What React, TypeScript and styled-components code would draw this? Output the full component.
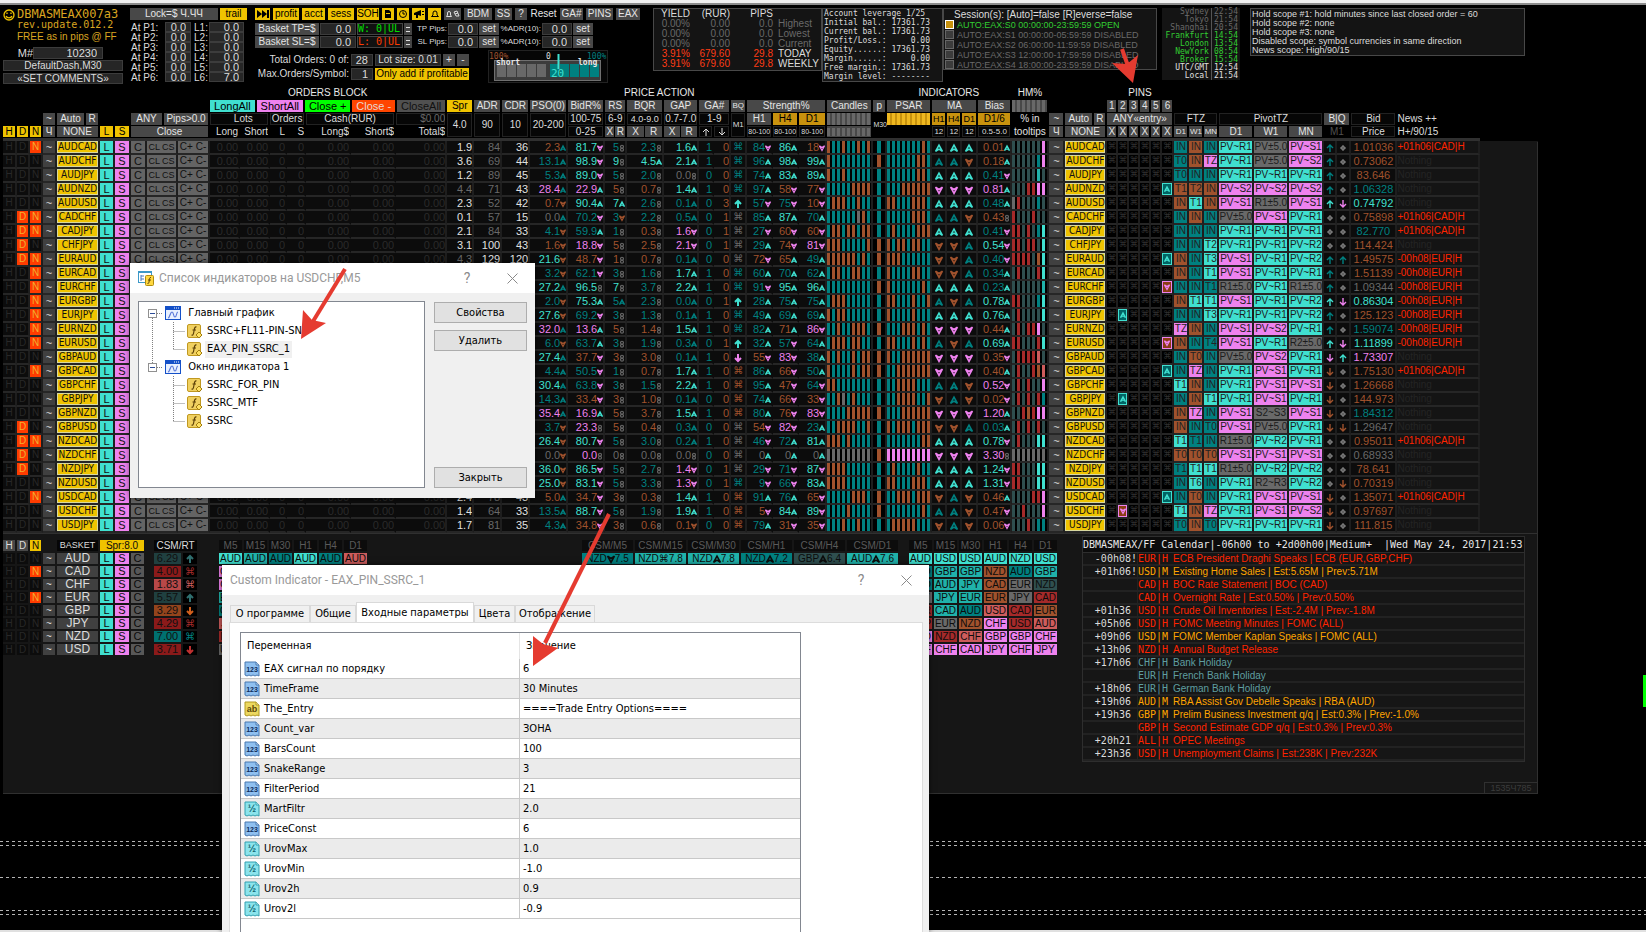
import React from "react";
import styled, { createGlobalStyle, css } from "styled-components";

const SANS = `"Liberation Sans", Arial, sans-serif`;
const MONO = `"DejaVu Sans Mono", monospace`;
const UI = `"DejaVu Sans Condensed", "DejaVu Sans", sans-serif`;
const TITLE = `Roboto, "Noto Sans", sans-serif`;

const C: Record<string, string> = {
  t: "#008080", T: "#40e0d0", s: "#a0522d", v: "#ee82ee", g: "#696969", w: "#e0e0e0",
  d: "#2f4f4f", L: "#20b2aa", r: "#a52a2a", c: "#cd5c5c", x: "#161616",
};

const Global = createGlobalStyle`
  html, body { margin: 0; height: 100%; background: #000; overflow: hidden; }
  #root { height: 100%; }
  button, input { font: inherit; margin: 0; padding: 0; border: 0; border-radius: 0; }
`;

const Page = styled.main`
  position: relative;
  min-width: 1560px;
  height: 100vh;
  overflow: hidden;
  display: flex;
  flex-direction: column;
  background: #000;
  color: #dcdcdc;
  font: 10px/12px ${SANS};
`;
const WindowEdge = styled.div`
  height: 3px;
  flex: none;
  background: #f0f0f0;
  border-bottom: 2px solid #8c8c8c;
`;

/* ---------- top control strip ---------- */
const TopBar = styled.header`
  display: flex;
  align-items: flex-start;
  height: 78px;
  flex: none;
  padding: 3px 0 0 3px;
  white-space: nowrap;
`;
const tone = {
  grey: css`background: #484848; color: #e4e4e4;`,
  dark: css`background: #262626; color: #dcdcdc; box-shadow: inset 0 0 0 1px #3c3c3c;`,
  gold: css`background: #efc300; color: #000;`,
  amber: css`background: #c8920e; color: #000;`,
  black: css`background: #000; color: #e4e4e4;`,
  box: css`background: #060606; color: #dcdcdc; box-shadow: inset 0 0 0 1px #222;`,
  cyan: css`background: #40e0d0; color: #000;`,
  pink: css`background: #ee82ee; color: #000;`,
  green: css`background: #00ff00; color: #000;`,
  red: css`background: #ff4500; color: #e8d8d0;`,
  mute: css`background: #505050; color: #111;`,
};
type Tone = keyof typeof tone;

const Btn = styled.button<{ $t?: Tone; $w?: number; $h?: number }>`
  ${(p) => tone[p.$t || "grey"]}
  display: flex;
  align-items: center;
  justify-content: center;
  flex: ${(p) => (p.$w ? "none" : "1 1 auto")};
  width: ${(p) => (p.$w ? p.$w + "px" : "auto")};
  height: ${(p) => p.$h || 12}px;
  overflow: hidden;
  white-space: nowrap;
`;
const Box = styled.input<{ $w: number; $h?: number }>`
  ${tone.dark}
  flex: none;
  width: ${(p) => p.$w}px;
  height: ${(p) => p.$h || 12}px;
  text-align: right;
  padding-right: 5px;
  box-sizing: border-box;
  font-size: 11px;
`;
const Brand = styled.section`
  width: 120px;
  margin-right: 7px;
  display: flex;
  flex-direction: column;
  font-size: 11px;
`;
const BrandHead = styled.div`
  display: flex;
  gap: 2px;
  color: #daa520;
  height: 39px;
  svg { margin-top: 1px; }
`;
const BrandName = styled.h1`
  margin: 0;
  font: 12px/12px ${MONO};
`;
const BrandRev = styled.div`
  font: 10px/9px ${MONO};
`;
const BrandNote = styled.div`
  font: 10px/15px ${SANS};
`;
const MagicRow = styled.label`
  display: flex;
  justify-content: flex-end;
  padding-right: 20px;
  height: 13px;
  input { padding-right: 6px; }
`;
const Stack = styled.div`
  display: flex;
  flex-direction: column;
  gap: 2px;
  font-size: 10px;
`;
const LockPanel = styled.section`
  width: 117px;
  margin-right: 8px;
`;
const Line = styled.div<{ $gap?: number; $mt?: number }>`
  display: flex;
  gap: ${(p) => p.$gap ?? 2}px;
  margin-top: ${(p) => p.$mt ?? 0}px;
  align-items: center;
`;
const Levels = styled.div`
  display: grid;
  grid-template-columns: 35px 26px 18px 35px;
  margin-top: 2px;
  font: 10px/10px ${SANS};
  label { padding: 1px 0 0 1px; height: 9px; }
  label:nth-of-type(even) { padding-left: 3px; }
`;
const Controls = styled.section`
  width: 388px;
  margin-right: 10px;
`;
const Mono = styled.div<{ $c: string; $w: number }>`
  width: ${(p) => p.$w}px;
  height: 12px;
  box-sizing: border-box;
  border: 1px solid #444;
  background: #111;
  color: ${(p) => p.$c};
  font: 10px/10px ${MONO};
  overflow: hidden;
  white-space: pre;
`;
const Spinner = styled.button`
  width: 8px;
  height: 12px;
  background: #444;
  color: #ddd;
  display: flex;
  align-items: center;
  justify-content: center;
`;
const FieldLabel = styled.label<{ $w: number; $f?: number }>`
  width: ${(p) => p.$w}px;
  flex: none;
  text-align: right;
  white-space: nowrap;
  font-size: ${(p) => p.$f || 10}px;
`;
const LowerControls = styled.div`
  display: flex;
  gap: 20px;
  margin-top: 2px;
`;
const OrderCol = styled.div`
  display: flex;
  flex-direction: column;
  gap: 2px;
  padding-top: 4px;
  width: 213px;
`;
const Gauge = styled.div`
  width: 118px;
  height: 31px;
  border: 1px solid #222;
  background: #060606;
  flex: none;
  svg { display: block; }
`;
const Panel = styled.section<{ $w: number; $h: number }>`
  box-sizing: border-box;
  width: ${(p) => p.$w}px;
  height: ${(p) => p.$h}px;
  flex: none;
  border: 1px solid #484848;
  background: #141414;
`;
const YieldTable = styled.table`
  border-collapse: collapse;
  table-layout: fixed;
  width: 166px;
  font: 10px/10px ${SANS};
  td, th { padding: 0; font-weight: normal; text-align: right; height: 10px; color: inherit; }
  td:last-child { text-align: left; padding-left: 5px; }
`;
const YRow = styled.tr<{ $c: string; $l?: string }>`
  color: ${(p) => p.$c};
  td:last-child { color: ${(p) => p.$l || p.$c}; }
`;
const Account = styled.pre`
  margin: 0;
  padding-left: 1px;
  font: 8px/9px ${MONO};
`;
const Sessions = styled.div`
  font: 9px/10px ${SANS};
  padding-top: 1px;
`;
const SessionTitle = styled.div`
  padding-left: 10px;
  font-size: 10px;
`;
const SessionLine = styled.label<{ $on?: boolean }>`
  display: flex;
  gap: 3px;
  color: ${(p) => (p.$on ? "#32cd32" : "#696969")};
  input {
    appearance: none;
    box-sizing: border-box;
    width: 9px;
    height: 9px;
    margin-left: 1px;
    background: ${(p) => (p.$on ? "#c8920e" : "#3c3c3c")};
    border: 1px solid ${(p) => (p.$on ? "#fff" : "#666")};
  }
`;
const Clocks = styled.table`
  border-collapse: collapse;
  background: #141414;
  width: 78px;
  margin: 0 10px 0 5px;
  font: 8px/8px ${MONO};
  td, th { padding: 0; height: 8px; font-weight: normal; text-align: right; }
  td { border-left: 1px solid #555; padding-right: 2px; }
  th { padding-right: 2px; }
`;
const ClockRow = styled.tr<{ $c: string }>`
  color: ${(p) => p.$c};
`;
const Scope = styled.div`
  font: 9px/9px ${SANS};
  padding: 1px;
`;

/* ---------- symbol grid ---------- */
const Frame = styled.section`
  margin: 0 108px 0 3px;
  flex: none;
  height: 708px;
  display: flex;
  flex-direction: column;
  background:
    linear-gradient(#303030, #303030) right bottom / 1px 652px no-repeat,
    linear-gradient(#303030, #303030) left bottom / 100% 1px no-repeat,
    linear-gradient(#000 0 55px, #161616 55px);
`;
const Grid = styled.table`
  table-layout: fixed;
  width: 1476px;
  flex: none;
  border-collapse: separate;
  border-spacing: 0;
  white-space: nowrap;
`;
const Th = styled.th<{ $t?: Tone; $h?: number; $a?: string; $f?: number; $c?: string; $spill?: boolean }>`
  ${(p) => p.$t && tone[p.$t]}
  box-sizing: border-box;
  height: ${(p) => p.$h || 13}px;
  padding: 0;
  overflow: ${(p) => (p.$spill ? "visible" : "hidden")};
  font-weight: normal;
  font-size: ${(p) => p.$f || 10}px;
  line-height: ${(p) => (p.$h === 12 ? 11 : 12)}px;
  text-align: ${(p) => p.$a || "center"};
  border-right: 2px solid #000;
  border-bottom: 1px solid #000;
  background-clip: padding-box;
  ${(p) => p.$c && `color: ${p.$c};`}
`;
const Divider = styled.td`
  height: 3px;
  padding: 0;
  background: #303030;
`;
const Title = styled(Th)`
  color: #e8e8e8;
  vertical-align: bottom;
`;
const Flex = styled.div<{ $gap?: number; $h?: number; $f?: number }>`
  display: flex;
  gap: ${(p) => p.$gap ?? 2}px;
  height: ${(p) => p.$h || 12}px;
  font-size: ${(p) => p.$f || 10}px;
  align-items: center;
`;
const Td = styled.td<{ $bg?: string; $c?: string; $a?: string; $f?: number; $join?: boolean }>`
  box-sizing: border-box;
  height: 14px;
  padding: 0;
  overflow: hidden;
  text-align: ${(p) => p.$a || "right"};
  color: ${(p) => p.$c || "#dcdcdc"};
  background: ${(p) => p.$bg || "#0c0c0c"};
  font: ${(p) => p.$f || 11}px/12px ${SANS};
  border-right: 2px solid ${(p) => (p.$join ? "#0c0c0c" : "#1e1e1e")};
  border-bottom: 2px solid #262626;
`;
const CellBtn = styled.button<{ $bg: string; $c?: string; $edge?: string; $f?: number }>`
  display: block;
  width: 100%;
  height: 12px;
  text-align: center;
  background: ${(p) => p.$bg};
  color: ${(p) => p.$c || "#111"};
  box-shadow: ${(p) => (p.$edge ? `inset 0 0 0 1px ${p.$edge}` : "none")};
  font: ${(p) => p.$f || 11}px/12px ${(p) => (p.$edge ? UI : SANS)};
  overflow: hidden;
  white-space: pre;
`;
const Bars = styled.div<{ $h?: number; $center?: boolean }>`
  display: flex;
  gap: 2px;
  height: ${(p) => p.$h || 12}px;
  justify-content: ${(p) => (p.$center ? "center" : "flex-start")};
`;
const Bar = styled.i<{ $c: string; $w?: number }>`
  width: ${(p) => p.$w || 3}px;
  background: ${(p) => p.$c};
`;
const PinBox = styled.span<{ $bg: string; $e: string }>`
  display: flex;
  align-items: center;
  justify-content: center;
  box-sizing: border-box;
  height: 12px;
  border: 1px solid ${(p) => p.$e};
  background: ${(p) => p.$bg};
`;

/* ---------- small glyphs ---------- */
const Glyph = styled.svg`
  vertical-align: middle;
  overflow: visible;
`;
const Mark = ({ k, c, s = 6 }: { k: string; c: string; s?: number }) => (
  <Glyph width={s} height={s} viewBox="0.500 0.500 7 7" fill="none" stroke={c} strokeWidth={1.4} aria-hidden>
    {k === "u" && <path d="M4 1.500L1 7L4 5L7 7Z" />}
    {k === "d" && <path d="M4 7L1 1.500L4 3.500L7 1.500Z" />}
    {k === "n" && (
      <>
        <circle cx="4" cy="2.500" r="1.700" />
        <circle cx="4" cy="6" r="1.700" />
      </>
    )}
  </Glyph>
);
const CmdGlyph = styled.span<{ $c: string; $s: number }>`
  display: inline-block;
  height: 11px;
  vertical-align: top;
  color: ${(p) => p.$c};
  font: ${(p) => p.$s}px/11px "DejaVu Sans", sans-serif;
`;
const Cmd = ({ c, s = 10 }: { c: string; s?: number }) => <CmdGlyph $c={c} $s={s}>⌘</CmdGlyph>;
const Arrow = ({ dir, c, w = 1.4 }: { dir: string; c: string; w?: number }) => (
  <Glyph width={8} height={8} viewBox="0 0 8 8" fill="none" stroke={c} strokeWidth={w} aria-hidden>
    {dir === "u" ? <path d="M4 8V1M1 4L4 1L7 4" /> : <path d="M4 0V7M1 4L4 7L7 4" />}
  </Glyph>
);
const Flake = ({ c }: { c: string }) => (
  <Glyph width={6} height={6} viewBox="0 0 6 6" fill="none" stroke={c} aria-hidden>
    <circle cx="3" cy="3" r="1.800" />
    <path d="M3 0V6M0 3H6" />
  </Glyph>
);

/* ---------- data ---------- */
type Row = {
  s: string; f: string; a: string; p: string; q: string; k: string; m: string;
  psar: string; h: string; ma: string; b: string; pin?: string; z: string; v: string; o: string; bid: string; n?: string;
};
const N1 = "+01h06|CAD|H";
const N2 = "-00h08|EUR|H";
const ROWS: Row[] = [
  { s: "AUDCAD", f: "N", a: "w1.9 g84 w36", p: "s2.3u T81.7d t5n t2.3n T1.6u 1 0 t", q: "t84d T86u s18d", k: "sttsttsts", m: "t", psar: "tttttttst", h: "ddddddv", ma: "UUU", b: "s0.01u", z: "tIN sIN tIN", v: "TPV~R1 gPV±5.0 vPV~S1", o: "un", bid: "s1.01036", n: N1 },
  { s: "AUDCHF", f: "", a: "w3.6 g69 w44", p: "t13.1u T98.9d T9n T4.5u T2.1u 1 0 t", q: "t96u T98u T99u", k: "stttttttt", m: "s", psar: "ttttttsst", h: "dddddtv", ma: "uud", b: "s0.18u", z: "tT0 sIN vTZ", v: "TPV~R1 gPV±5.0 vPV~S2", o: "un", bid: "s0.73062" },
  { s: "AUDJPY", f: "", a: "w1.2 g89 w45", p: "t5.3u T89.0d t5n t2.0n g0.0n 0 0 t", q: "t74u T83u T89u", k: "sttsttttt", m: "t", psar: "ttttttsst", h: "dddddLd", ma: "UUU", b: "t0.41d", z: "tT0 tIN tIN", v: "TPV~R1 TPV~R1 TPV~R1", o: "un", bid: "s83.646" },
  { s: "AUDNZD", f: "", a: "g4.4 g71 w43", p: "v28.4u v22.9u s5n s0.7n T1.4u 1 0 t", q: "t97u s58d s77d", k: "tttttssss", m: "t", psar: "tttssssss", h: "dddrrvv", ma: "DDD", b: "v0.81u", pin: "6u", z: "sT1 sT2 sIN", v: "vPV~S2 vPV~S2 vPV~S2", o: "un", bid: "t1.06328" },
  { s: "AUDUSD", f: "", a: "w2.3 g52 w42", p: "s0.7d T90.4u T7u t2.6n t0.1u 0 3 U", q: "t57d t75d s10d", k: "tsssttstt", m: "t", psar: "sstttssst", h: "grdddtd", ma: "UUU", b: "t0.48u", z: "sIN TT1 sIN", v: "vPV~S1 gR1±5.0 vPV~S1", o: "UD", bid: "T0.74792" },
  { s: "CADCHF", f: "DN", a: "w0.1 g57 w15", p: "g0.0u t70.2d t3d t2.2n t0.5u 0 1 g", q: "t85u T87u t70u", k: "ttttttgst", m: "t", psar: "tttttssst", h: "rdddrdd", ma: "uud", b: "s0.43n", z: "tIN sIN tIN", v: "gPV±5.0 vPV~S1 TPV~R1", o: "nn", bid: "s0.75898", n: N1 },
  { s: "CADJPY", f: "DN", a: "w2.1 g84 w33", p: "t4.1d t59.9u t1n s0.3n v1.6d 0 1 g", q: "t27d s60d s60d", k: "tsstsstss", m: "t", psar: "tsttttsss", h: "rrdrdtT", ma: "UUU", b: "t0.41d", z: "tIN tIN tIN", v: "TPV~R1 TPV~R1 TPV~R1", o: "nn", bid: "t82.770", n: N1 },
  { s: "CHFJPY", f: "D", a: "w3.1 w100 w43", p: "s1.6d v18.8d s5n s2.5n v2.1d 0 1 g", q: "t29u s74d v81d", k: "sssttttts", m: "s", psar: "stsstsstt", h: "rrdrrdT", ma: "ddu", b: "T0.54d", z: "tIN tIN TT2", v: "TPV~R1 TPV~R1 TPV~R2", o: "nn", bid: "s114.424" },
  { s: "EURAUD", f: "DN", a: "g4.3 w129 w120", p: "T21.6d s48.7d s1n s0.7n t0.1u 0 0 g", q: "s72d s65u t49u", k: "sssssstst", m: "s", psar: "ssstttttt", h: "rrrrdsT", ma: "ddu", b: "t0.40d", pin: "6u", z: "sIN tIN TT3", v: "vPV~S1 TPV~R1 TPV~R2", o: "uu", bid: "s1.49575", n: N2 },
  { s: "EURCAD", f: "N", a: "", p: "t3.2d t62.1d t3n t1.6n T1.7u 1 0 t", q: "t60u t70u t62u", k: "tssttsstt", m: "t", psar: "sttttsstt", h: "drdddrT", ma: "ddu", b: "t0.34u", z: "sIN tIN TT1", v: "vPV~S1 TPV~R1 TPV~R1", o: "un", bid: "s1.51139", n: N2 },
  { s: "EURCHF", f: "N", a: "", p: "T27.2u T96.5n T7n t3.7n T2.2u 1 0 t", q: "t91d T95u T96u", k: "ttttttttt", m: "s", psar: "sttttttst", h: "ddddddL", ma: "UUU", b: "t0.23u", pin: "6d", z: "tIN tIN tT1", v: "gR1±5.0 TPV~R1 gR1±5.0", o: "un", bid: "g1.09344", n: N2 },
  { s: "EURGBP", f: "N", a: "", p: "t2.0d T75.3u t5u t2.3n t0.0u 0 1 U", q: "t28u t75u t75u", k: "tsssttttt", m: "t", psar: "sstttstts", h: "rrdddtT", ma: "udu", b: "T0.78u", z: "sIN TT1 TT1", v: "vPV~S1 TPV~R1 TPV~R2", o: "UD", bid: "T0.86304", n: N2 },
  { s: "EURJPY", f: "N", a: "", p: "T27.6d t69.2d t3n t1.3n t0.1u 1 0 t", q: "t49u t69u t69u", k: "stssttttt", m: "t", psar: "sttttsttt", h: "drddddT", ma: "UUU", b: "T0.76u", pin: "2u", z: "tIN tIN TT3", v: "TPV~R1 TPV~R1 TPV~R2", o: "un", bid: "s125.123", n: N2 },
  { s: "EURNZD", f: "N", a: "", p: "v32.0u v13.6u s5n s1.4n T1.5u 1 0 t", q: "t82u s71u v86d", k: "ttsttssst", m: "s", psar: "tttssstst", h: "drdrrvd", ma: "DDD", b: "s0.44u", z: "vTZ sIN tIN", v: "vPV~S1 vPV~S2 TPV~R1", o: "un", bid: "t1.59074", n: N2 },
  { s: "EURUSD", f: "N", a: "", p: "t6.0d t63.7u t3n t1.9n t0.3u 0 1 U", q: "t32u t57d t64u", k: "tssstsstt", m: "t", psar: "sstttstst", h: "rrdddrT", ma: "udu", b: "T0.69u", pin: "6d", z: "sIN tIN tT4", v: "vPV~S1 TPV~R1 gR2±5.0", o: "UD", bid: "T1.11899", n: N2 },
  { s: "GBPAUD", f: "", a: "", p: "T27.4u s37.7d s3n s3.0n t0.1u 1 0 D", q: "s55d v83d t38u", k: "ststtstss", m: "s", psar: "sttssssss", h: "drrrrcd", ma: "DDD", b: "s0.35d", z: "tIN sT0 tIN", v: "gPV±5.0 vPV~S2 TPV~R1", o: "DU", bid: "v1.73307" },
  { s: "GBPCAD", f: "N", a: "", p: "t4.4u t50.5d t1n s0.7n T1.7u 1 0 s", q: "t86u s66d t50u", k: "sttttstss", m: "s", psar: "ttsssssss", h: "drddrsc", ma: "DDD", b: "s0.40u", pin: "6u", z: "tIN vTZ tIN", v: "TPV~R1 vPV~S1 TPV~R1", o: "dn", bid: "s1.75130", n: N1 },
  { s: "GBPCHF", f: "", a: "", p: "T30.4u t63.8d t3n t1.5n T2.2u 1 0 s", q: "t95u s47d t64d", k: "ssttttttt", m: "t", psar: "ttssssttt", h: "drdrddv", ma: "uud", b: "v0.52d", z: "TT1 sIN tIN", v: "TPV~R1 vPV~S1 vPV~S1", o: "dn", bid: "s1.26668" },
  { s: "GBPJPY", f: "", a: "", p: "t14.3u s33.4d s3n s1.0n t0.1u 0 0 s", q: "t74u s66d s33d", k: "ttsgtsttt", m: "t", psar: "ttsssstts", h: "drdrdrt", ma: "dud", b: "s0.02d", pin: "2u", z: "tIN sIN TT1", v: "TPV~R1 vPV~S1 TPV~R1", o: "dn", bid: "s144.973" },
  { s: "GBPNZD", f: "", a: "", p: "v35.4u v16.9u s5n s3.7n T1.5u 1 0 s", q: "t80u s76d v83d", k: "ttttsssss", m: "s", psar: "tttssssss", h: "ddrsrvv", ma: "DDD", b: "v1.20u", z: "sIN vTZ tIN", v: "vPV~S1 gS2~S3 vPV~S1", o: "dn", bid: "t1.84312" },
  { s: "GBPUSD", f: "D", a: "", p: "t3.7d v23.3n s5n s0.4n t0.3u 0 0 g", q: "s54d v82d t23u", k: "ttsssstts", m: "t", psar: "stssstsss", h: "drdrdrd", ma: "ddu", b: "t0.03u", z: "sIN tIN tT0", v: "vPV~S1 gPV±5.0 TPV~R1", o: "dd", bid: "g1.29647" },
  { s: "NZDCAD", f: "DN", a: "", p: "T26.4d T80.7d t5n t3.0n t0.2u 1 0 g", q: "t46d t72u T81u", k: "ssststttt", m: "t", psar: "tttttttss", h: "drdddTT", ma: "UUU", b: "T0.78d", z: "TT1 tT1 tIN", v: "gR1±5.0 TPV~R2 TPV~R1", o: "nn", bid: "s0.95011", n: N1 },
  { s: "NZDCHF", f: "D", a: "", p: "g0.0d v0.0n g0n g0.0n g0.0n 0 0 g", q: "g0u g0u g0u", k: "ggggggggg", m: "s", psar: "vvvvvvvvv", h: "ggggggg", ma: "DDD", b: "v3.30n", z: "sT0 sT0 sT0", v: "vPV~S1 vPV~S1 vPV~S1", o: "nn", bid: "g0.68933" },
  { s: "NZDJPY", f: "D", a: "", p: "T36.0d T86.5d t5n t2.7n v1.4d 0 1 g", q: "t29d t71d T87d", k: "ssssttttt", m: "t", psar: "tsttttstt", h: "rrdddTT", ma: "UUU", b: "T1.24d", z: "tT1 TT1 TT1", v: "gR1±5.0 TPV~R2 TPV~R2", o: "nn", bid: "s78.641" },
  { s: "NZDUSD", f: "", a: "", p: "T25.0d T83.1d t5n t3.3n v1.3d 0 1 t", q: "t9d t66d T83u", k: "ssssttttt", m: "t", psar: "sstttssst", h: "rrdddTT", ma: "UUU", b: "T1.31d", z: "tIN TT6 tIN", v: "TPV~R1 gR2~R3 TPV~R2", o: "nd", bid: "s0.70319" },
  { s: "USDCAD", f: "N", a: "w2.4 g78 w43", p: "s5.0u s34.7d s3n s0.3n T1.4u 1 0 s", q: "t91u t76u s65d", k: "tttttssst", m: "s", psar: "ttssstsss", h: "ddddrrv", ma: "dud", b: "s0.46u", pin: "6u", z: "tIN sT0 tIN", v: "TPV~R1 vPV~S1 vPV~S1", o: "dn", bid: "s1.35071", n: N1 },
  { s: "USDCHF", f: "", a: "w1.4 g64 w33", p: "t13.5u T88.7d t5n t1.9n T1.9u 1 0 s", q: "s5d T84u T89d", k: "ttttstttt", m: "s", psar: "tttttttst", h: "ddrdddv", ma: "uud", b: "s0.47d", pin: "2d", z: "TT1 sIN vTZ", v: "TPV~R1 vPV~S1 vPV~S2", o: "dn", bid: "s0.97697" },
  { s: "USDJPY", f: "", a: "w1.7 g81 w35", p: "t4.3u s34.8d s3n s0.6n s0.1d 0 0 s", q: "t79u s31d s35d", k: "tttsttstt", m: "t", psar: "tsssssttt", h: "dddrdtt", ma: "dud", b: "s0.06d", z: "tT0 sIN tT0", v: "TPV~R1 TPV~R1 TPV~R1", o: "dn", bid: "s111.815" },
];

const WIDTHS = [
  14, 13, 13, 14, 43, 15, 16, 16, 31, 32,
  30, 30, 17, 19, 45, 45, 51,
  27, 28, 28, 38, 37, 22, 37, 35, 15, 17, 16, 26, 26, 28, 46, 14, 45, 15, 15, 16, 34, 37,
  16, 42, 11, 11, 11, 11, 11, 12, 15, 15, 15, 35, 35, 35, 13, 14, 46, 82,
];

const split = (v: string) => {
  const m = v.match(/^(.)([\d.]+)([udn]?)$/)!;
  return { c: C[m[1]], bright: "TvU".includes(m[1]), val: m[2], k: m[3] };
};
const ValueCell = ({ v, mode, join }: { v: string; mode: "dim" | "bright" | "auto"; join?: boolean }) => {
  const { c, bright, val, k } = split(v);
  const hot = mode === "bright" || (mode === "auto" && bright);
  const mc = k === "n" ? C.g : k === "u" ? (hot ? C.T : C.t) : hot ? C.v : C.s;
  return (
    <Td $c={c} $join={join}>
      {val}
      {k && <Mark k={k} c={mc} />}
    </Td>
  );
};
const BarSet = ({ v }: { v: string }) => (
  <Bars>{v.split("").map((x, i) => <Bar key={i} $c={C[x]} />)}</Bars>
);
const GreyBars = ({ n, c = "#686868", h }: { n: number; c?: string; h?: number }) => (
  <Bars $h={h}>{Array.from({ length: n }, (_, i) => <Bar key={i} $c={c} />)}</Bars>
);

const SymbolRow = ({ r }: { r: Row }) => {
  const p = r.p.split(" ");
  const a = r.a ? r.a.split(" ") : ["", "", ""];
  const modes = ["dim", "bright", "auto", "auto", "auto"] as const;
  const bq = p[7];
  return (
    <tr>
      {["H", "D", "N"].map((x) => (
        <Td key={x}>
          <CellBtn $f={10} $bg={r.f.includes(x) ? "#ff3c00" : "#0c0c0c"} $c={r.f.includes(x) ? "#efb030" : "#282828"}>{x}</CellBtn>
        </Td>
      ))}
      <Td><CellBtn $bg="#404040" $c="#ddd">~</CellBtn></Td>
      <Td><CellBtn $bg="#efc300" $edge="#d8d8a0" $f={10}>{r.s}</CellBtn></Td>
      <Td><CellBtn $bg="#40e0d0">L</CellBtn></Td>
      <Td><CellBtn $bg="#ee82ee">S</CellBtn></Td>
      <Td><CellBtn $bg="#646464">C</CellBtn></Td>
      <Td><CellBtn $bg="#646464" $f={9}>CL CS</CellBtn></Td>
      <Td><CellBtn $bg="#646464" $f={10}>C+ C-</CellBtn></Td>
      {["0.00", "0.00", "0", "0", "0.00", "0.00", "0.00"].map((x, i) => (
        <Td key={i} $c="#2a2a2a" $join={i < 6}>{x}</Td>
      ))}
      {a.map((x, i) => (
        <Td key={i} $c={C[x[0]]}>{x.slice(1)}</Td>
      ))}
      {modes.map((m, i) => <ValueCell key={i} v={p[i]} mode={m} />)}
      <Td $c={C.t} $join>{p[5]}</Td>
      <Td $c={C.s}>{p[6]}</Td>
      <Td $a="center">
        {bq === "U" ? <Arrow dir="u" c={C.T} w={2} /> : bq === "D" ? <Arrow dir="d" c={C.v} w={2} /> : <Cmd c={C[bq]} />}
      </Td>
      {r.q.split(" ").map((x, i) => <ValueCell key={i} v={x} mode="bright" join={i < 2} />)}
      <Td $bg="#000"><BarSet v={r.k} /></Td>
      <Td $bg="#000"><Bars $center><Bar $c={C[r.m]} $w={4} /></Bars></Td>
      <Td $bg="#000"><BarSet v={r.psar} /></Td>
      {r.ma.split("").map((x, i) => (
        <Td key={i} $a="center">
          <Mark s={8} k={x.toLowerCase()} c={x === "U" ? C.T : x === "u" ? C.t : x === "D" ? C.v : C.s} />
        </Td>
      ))}
      <ValueCell v={r.b} mode="bright" />
      <Td $bg="#000"><BarSet v={r.h} /></Td>
      <Td><CellBtn $bg="#404040" $c="#ddd">~</CellBtn></Td>
      <Td><CellBtn $bg="#efc300" $edge="#d8d8a0" $f={10}>{r.s}</CellBtn></Td>
      {[1, 2, 3, 4, 5, 6].map((i) => {
        const hit = r.pin && r.pin[0] === String(i) ? r.pin[1] : "";
        return (
          <Td key={i} $a="center" $bg="#000">
            {hit ? (
              <PinBox $bg={hit === "u" ? "#006464" : "#8b3c14"} $e={hit === "u" ? C.T : C.v}>
                <Mark k={hit} c={hit === "u" ? C.T : C.v} />
              </PinBox>
            ) : (
              <Cmd c="#303030" s={9} />
            )}
          </Td>
        );
      })}
      {r.z.split(" ").map((x, i) => (
        <Td key={i} $a="center" $bg={C[x[0]]} $c="#222" $f={10}>{x.slice(1)}</Td>
      ))}
      {r.v.split(" ").map((x, i) => (
        <Td key={i} $a="center" $bg={C[x[0]]} $c="#1c1c1c" $f={10}>{x.slice(1)}</Td>
      ))}
      {r.o.split("").map((x, i) => (
        <Td key={i} $a="center">
          {x === "n" ? <Flake c="#808080" /> : <Arrow dir={x.toLowerCase()} c={{ u: C.t, U: C.T, d: C.s, D: C.v }[x]!} />}
        </Td>
      ))}
      <Td $a="center" $c={C[r.bid[0]]}>{r.bid.slice(1)}</Td>
      <Td $a="left" $bg="#141414" $c={r.n ? "#ff2400" : "#242424"} $f={10}>{r.n || "Nothing"}</Td>
    </tr>
  );
};

const GridHead = () => (
  <thead>
    <tr>
      <Title $h={14} colSpan={10} />
      <Title $h={14} colSpan={7}>ORDERS BLOCK</Title>
      <Title $h={14} colSpan={15}>PRICE ACTION</Title>
      <Title $h={14} />
      <Title $h={14} colSpan={5}>INDICATORS</Title>
      <Title $h={14}>HM%</Title>
      <Title $h={14} colSpan={2} />
      <Title $h={14} colSpan={6}>PINS</Title>
      <Title $h={14} colSpan={10} />
    </tr>
    <tr>
      <Th colSpan={10} />
      <Th colSpan={7}>
        <Flex $f={11}>
          <Btn $t="cyan">LongAll</Btn>
          <Btn $t="pink">ShortAll</Btn>
          <Btn $t="green">Close +</Btn>
          <Btn $t="red">Close -</Btn>
          <Btn $t="mute">CloseAll</Btn>
        </Flex>
      </Th>
      <Th $t="gold">Spr</Th>
      {["ADR", "CDR", "PSO(0)", "BidR%", "RS", "BQR", "GAP"].map((x) => <Th key={x} $t="grey">{x}</Th>)}
      <Th $t="grey" colSpan={2}>GA#</Th>
      <Th $t="grey" $f={8}>BQ</Th>
      <Th $t="grey" colSpan={3}>Strength%</Th>
      <Th $t="grey">Candles</Th>
      <Th $t="grey">p</Th>
      <Th $t="grey">PSAR</Th>
      <Th $t="grey" colSpan={3}>MA</Th>
      <Th $t="grey">Bias</Th>
      <Th $t="grey"><GreyBars n={7} /></Th>
      <Th colSpan={2} />
      {[1, 2, 3, 4, 5, 6].map((x) => <Th key={x} $t="grey">{x}</Th>)}
      <Th colSpan={10} />
    </tr>
    <tr>
      <Th colSpan={3} />
      <Th $t="grey">~</Th>
      <Th><Flex><Btn $w={27}>Auto</Btn><Btn>R</Btn></Flex></Th>
      <Th colSpan={2} />
      <Th colSpan={3}><Flex><Btn $w={31}>ANY</Btn><Btn>Pips&gt;0.0</Btn></Flex></Th>
      <Th $t="box" colSpan={2}>&nbsp;&nbsp;&nbsp;Lots</Th>
      <Th $t="box" colSpan={2}>Orders</Th>
      <Th $t="box" colSpan={2}>Cash(RUR)</Th>
      <Th $t="box" $a="right" $c="#696969">$0.00</Th>
      {["4.0", "90", "10", "20-200"].map((x) => <Th key={x} rowSpan={2} $t="box">{x}</Th>)}
      <Th $t="box">100-75</Th>
      <Th $t="box">6-9</Th>
      <Th $t="box" $f={9}>4.0-9.0</Th>
      <Th $t="box">0.7-7.0</Th>
      <Th $t="box" colSpan={2}>1-9</Th>
      <Th $t="box" rowSpan={2} $f={8}>M1</Th>
      <Th $t="grey">H1</Th>
      <Th $t="amber">H4</Th>
      <Th $t="amber">D1</Th>
      <Th $t="grey"><GreyBars n={9} /></Th>
      <Th rowSpan={2} $f={7} $spill>M30</Th>
      <Th $t="amber"><GreyBars n={9} c="#efb820" /></Th>
      {["H1", "H4", "D1"].map((x) => <Th key={x} $t="amber" $f={9}>{x}</Th>)}
      <Th $t="amber">D1/6</Th>
      <Th $t="black">% in</Th>
      <Th $t="grey">~</Th>
      <Th><Flex><Btn $w={27}>Auto</Btn><Btn>R</Btn></Flex></Th>
      <Th $t="grey" colSpan={6}>ANY«entry»</Th>
      <Th $t="box" colSpan={3}>FTZ</Th>
      <Th $t="box" colSpan={3}>PivotTZ</Th>
      <Th $t="grey" colSpan={2}>B|Q</Th>
      <Th $t="box">Bid</Th>
      <Th $a="left">News ++</Th>
    </tr>
    <tr>
      {["H", "D", "N"].map((x) => <Th key={x} $t="gold" $h={12}>{x}</Th>)}
      <Th $t="grey" $h={12}>Ч</Th>
      <Th $t="grey" $h={12}>NONE</Th>
      <Th $t="gold" $h={12}>L</Th>
      <Th $t="gold" $h={12}>S</Th>
      <Th $t="grey" $h={12} colSpan={3}>Close</Th>
      {["Long", "Short", "L", "S", "Long$", "Short$", "Total$"].map((x, i) => <Th key={i} $a="right" $h={12}>{x}</Th>)}
      <Th $t="box" $h={12}>0-25</Th>
      {[0, 1, 2].map((i) => (
        <Th key={i} $h={12}><Flex $gap={1} $h={11}><Btn $h={11}>X</Btn><Btn $h={11}>R</Btn></Flex></Th>
      ))}
      <Th $t="box" $h={12}><Arrow dir="u" c="#ddd" w={1} /></Th>
      <Th $t="box" $h={12}><Arrow dir="d" c="#ddd" w={1} /></Th>
      {[0, 1, 2].map((i) => <Th key={i} $t="box" $h={12} $f={7}>80-100</Th>)}
      <Th $t="grey" $h={12}><GreyBars n={9} h={8} /></Th>
      <Th $h={12} />
      {[0, 1, 2].map((i) => <Th key={i} $t="box" $h={12} $f={8}>12</Th>)}
      <Th $t="box" $h={12} $f={8}>0.5-5.0</Th>
      <Th $t="black" $h={12}>tooltips</Th>
      <Th $t="grey" $h={12}>Ч</Th>
      <Th $t="grey" $h={12}>NONE</Th>
      {[0, 1, 2, 3, 4, 5].map((i) => <Th key={i} $t="grey" $h={12}>X</Th>)}
      {["D1", "W1", "MN"].map((x) => <Th key={x} $t="grey" $h={12} $f={8}>{x}</Th>)}
      {["D1", "W1", "MN"].map((x) => <Th key={x} $t="grey" $h={12}>{x}</Th>)}
      <Th $h={12} colSpan={2} $c="#505050">M1</Th>
      <Th $t="box" $h={12}>Price</Th>
      <Th $a="left" $h={12}>H+/90/15</Th>
    </tr>
    <tr><Divider colSpan={57} /></tr>
  </thead>
);

/* ---------- bottom panel ---------- */
const Bottom = styled.div`
  flex: 1;
  display: flex;
  justify-content: space-between;
  padding: 2px 13px 0 0;
  border-top: 1px solid #303030;
  white-space: nowrap;
`;
const Group = styled.div<{ $gap: number }>`
  display: flex;
  align-items: flex-start;
  gap: ${(p) => p.$gap}px;
`;
const Small = styled.table<{ $w: number }>`
  table-layout: fixed;
  width: ${(p) => p.$w}px;
  margin-top: 4px;
  border-collapse: separate;
  border-spacing: 0;
  font: 10px/11px ${SANS};
`;
const Cell = styled.td<{ $bg?: string; $c?: string; $f?: number }>`
  box-sizing: border-box;
  height: 13px;
  padding: 0;
  overflow: hidden;
  text-align: center;
  background: ${(p) => p.$bg || "transparent"};
  color: ${(p) => p.$c || "#0c0c0c"};
  font-size: ${(p) => p.$f || 10}px;
  font-weight: normal;
  border-right: 2px solid #161616;
  border-bottom: 2px solid #161616;
  background-clip: padding-box;
  button { display: block; width: 100%; height: 11px; background: none; color: inherit; line-height: 11px; }
`;
const BASKETS: [string, string, string, string, string][] = [
  ["AUD", "", "6.29", "#204040", "a#2f6f6f"],
  ["CAD", "N", "4.00", "#8b1a1a", "c#a52a2a"],
  ["CHF", "", "1.83", "#b84848", "c#cd5c5c"],
  ["EUR", "N", "5.57", "#204040", "a#2f6f6f"],
  ["GBP", "", "3.29", "#94441c", "b#d2601d"],
  ["JPY", "", "4.29", "#8b1a1a", "c#a52a2a"],
  ["NZD", "", "7.00", "#007070", "c#008080"],
  ["USD", "", "3.71", "#8b1a1a", "b#c03030"],
];
const PERIODS = ["M5", "M15", "M30", "H1", "H4", "D1"];
const HeadCell = ({ children }: { children: React.ReactNode }) => (
  <Cell as="th" $bg="#0c0c0c" $c="#5a5a5a">{children}</Cell>
);
const Ranks = ({ rows }: { rows: string[] }) => (
  <Small $w={150}>
    <thead><tr>{PERIODS.map((x) => <HeadCell key={x}>{x}</HeadCell>)}</tr></thead>
    <tbody>
      {rows.map((r, i) => (
        <tr key={i}>
          {r.split(" ").map((x, j) => <Cell key={j} $bg={C[x[0]]}>{x.slice(1)}</Cell>)}
        </tr>
      ))}
    </tbody>
  </Small>
);
const Calendar = styled.table`
  table-layout: fixed;
  width: 443px;
  margin-left: 14px;
  border: 1px solid #2e2e2e;
  border-collapse: separate;
  border-spacing: 0;
  font: 10px/11px ${MONO};
  th { height: 15px; padding: 0; text-align: left; font-weight: normal; white-space: pre; background: #0c0c0c; border-bottom: 1px solid #2e2e2e; color: #e8e8e8; }
  td { box-sizing: border-box; height: 13px; padding: 0; border-bottom: 2px solid #222; white-space: pre; }
  td:first-child { text-align: right; color: #dcdcdc; border-right: 1px solid #222; }
`;
const CalRow = styled.tr<{ $c: string }>`
  color: ${(p) => p.$c};
  td:last-child { font: 10px/11px ${SANS}; }
`;
const EVENTS = [
  ["-00h08!", "EUR|H", "ECB President Draghi Speaks | ECB (EUR,GBP,CHF)"],
  ["+01h06!", "USD|M", "Existing Home Sales | Est:5.65M | Prev:5.71M"],
  ["", "CAD|H", "BOC Rate Statement | BOC (CAD)"],
  ["", "CAD|H", "Overnight Rate | Est:0.50% | Prev:0.50%"],
  ["+01h36 ", "USD|H", "Crude Oil Inventories | Est:-2.4M | Prev:-1.8M"],
  ["+05h06 ", "USD|H", "FOMC Meeting Minutes | FOMC (ALL)"],
  ["+09h06 ", "USD|M", "FOMC Member Kaplan Speaks | FOMC (ALL)"],
  ["+13h06 ", "NZD|H", "Annual Budget Release"],
  ["+17h06 ", "CHF|H", "Bank Holiday"],
  ["", "EUR|H", "French Bank Holiday"],
  ["+18h06 ", "EUR|H", "German Bank Holiday"],
  ["+19h06 ", "AUD|M", "RBA Assist Gov Debelle Speaks | RBA (AUD)"],
  ["+19h36 ", "GBP|M", "Prelim Business Investment q/q | Est:0.3% | Prev:-1.0%"],
  ["", "GBP|H", "Second Estimate GDP q/q | Est:0.3% | Prev:0.3%"],
  ["+20h21 ", "ALL|H", "OPEC Meetings"],
  ["+23h36 ", "USD|H", "Unemployment Claims | Est:238K | Prev:232K"],
];
const Badge = styled.div`
  align-self: flex-end;
  box-sizing: border-box;
  width: 54px;
  height: 12px;
  border: 1px solid #303030;
  color: #3c3c3c;
  text-align: center;
  font: 9px/10px ${SANS};
`;
const LevelArea = styled.div`
  flex: 1;
  padding-top: 47px;
  border-bottom: 2px solid #e0e0e0;
`;
const LevelLine = styled.div<{ $mb: number }>`
  height: 1px;
  margin-bottom: ${(p) => p.$mb}px;
  background: repeating-linear-gradient(90deg, #b4b4b4 0 3px, transparent 3px 6px);
`;
const ScrollFlag = styled.div`
  position: absolute;
  right: 0;
  top: 675px;
  width: 3px;
  height: 32px;
  background: #00ff00;
`;

/* ---------- floating windows ---------- */
const Win = styled.section<{ $x: number; $y: number; $w: number; $h?: number }>`
  position: absolute;
  left: ${(p) => p.$x}px;
  top: ${(p) => p.$y}px;
  width: ${(p) => p.$w}px;
  ${(p) => (p.$h ? `height: ${p.$h}px;` : "bottom: 0;")}
  display: flex;
  flex-direction: column;
  background: #f0f0f0;
  color: #000;
  font: 11px/14px ${UI};
  box-shadow: 0 0 6px rgba(0, 0, 0, 0.6);
  overflow: hidden;
`;
const WinTitle = styled.header`
  flex: none;
  display: flex;
  align-items: center;
  height: 30px;
  padding: 0 13px 0 8px;
  gap: 5px;
  background: #fff;
  color: #999;
  font: 12px/16px ${TITLE};
  h2 { flex: 1; margin: 0; font: inherit; }
`;
const WinBtn = styled.button`
  width: 20px;
  margin-left: 20px;
  height: 20px;
  background: none;
  color: #8a8a8a;
  font-size: 14px;
  display: flex;
  align-items: center;
  justify-content: center;
`;
const ListBody = styled.div`
  flex: 1;
  display: flex;
  gap: 9px;
  padding: 8px 8px 10px;
`;
const Tree = styled.ul`
  flex: 1;
  margin: 0;
  padding: 2px 0 0;
  list-style: none;
  background: #fff;
  border: 1px solid #828790;
`;
const TreeItem = styled.li<{ $sel?: boolean }>`
  display: flex;
  align-items: center;
  height: 18px;
  gap: 2px;
  svg { flex: none; }
  span {
    padding: 1px 2px 2px;
    background: ${(p) => (p.$sel ? "#f0f0f0" : "none")};
  }
`;
const SideBtns = styled.div`
  display: flex;
  flex-direction: column;
  gap: 7px;
  padding-top: 1px;
  button:last-child { margin-top: auto; }
`;
const WinButton = styled.button`
  box-sizing: border-box;
  width: 93px;
  height: 21px;
  background: #e1e1e1;
  border: 1px solid #adadad;
  color: #000;
`;
const Tabs = styled.nav`
  display: flex;
  align-items: flex-end;
  margin: 7px 7px 0 8px;
  height: 20px;
`;
const Tab = styled.button<{ $w: number; $on?: boolean }>`
  box-sizing: border-box;
  width: ${(p) => p.$w}px;
  height: ${(p) => (p.$on ? 21 : 17)}px;
  margin-bottom: ${(p) => (p.$on ? -1 : 0)}px;
  background: ${(p) => (p.$on ? "#fff" : "#f0f0f0")};
  border: 1px solid #d9d9d9;
  border-bottom: 0;
  color: #000;
  white-space: nowrap;
`;
const TabPane = styled.div`
  flex: 1;
  margin: 0 6px 0 7px;
  padding: 9px 0 0 10px;
  background: #fff;
  border: 1px solid #dcdcdc;
`;
const ParamFrame = styled.div`
  width: 559px;
  height: 400px;
  border: 1px solid #828790;
`;
const Params = styled.table`
  table-layout: fixed;
  width: 100%;
  border-collapse: separate;
  border-spacing: 0;
  th { height: 26px; font-weight: normal; text-align: left; padding: 0 6px; vertical-align: middle; }
  th + th { border-left: 1px solid #e5e5e5; }
  td { box-sizing: border-box; height: 20px; padding: 0 3px; border-bottom: 1px solid #c8c8c8; white-space: nowrap; }
  td + td { border-left: 1px solid #c8c8c8; }
  tbody tr:nth-child(even) td { background: #ebebeb; }
  svg { vertical-align: middle; margin-right: 4px; }
`;
const Overlay = styled.svg`
  position: absolute;
  left: 0;
  top: 0;
  pointer-events: none;
`;

const ParamIcon = ({ k }: { k: string }) => {
  const [bg, fg, edge] = k === "123" ? ["#8fc0f0", "#0c2c5c", "#4878b0"] : k === "ab" ? ["#ecd860", "#5c4808", "#b09820"] : ["#8ce4ec", "#0c6470", "#30a0b0"];
  return (
    <svg width="16" height="16" viewBox="0 0 16 16" aria-hidden>
      <path d="M1 1H12L15 4V15L13 14L11 15L9 14L7 15L5 14L3 15L1 14Z" fill={bg} stroke={edge} />
      <path d="M12 1V4H15" fill="#fff" fillOpacity=".5" stroke={edge} />
      <text x="8" y="11" textAnchor="middle" fontFamily="Liberation Sans" fontWeight="bold" fontSize={k === "ab" ? 9 : k === "123" ? 7 : 10} fill={fg}>{k}</text>
    </svg>
  );
};
const WindowIcon = () => (
  <svg width="16" height="16" viewBox="0 0 16 16" aria-hidden>
    <rect x=".5" y="1.500" width="15" height="13" fill="#e8f0ff" stroke="#1450c8" />
    <rect x="0" y="1" width="16" height="4" fill="#1450c8" />
    <path d="M9 3h1M11 3h1M13 3h1" stroke="#fff" />
    <path d="M3 13C5 13 5 7 7 7S8 12 10 12S11 7 13 7" fill="none" stroke="#5a78d8" strokeWidth="1.200" />
  </svg>
);
const FnIcon = () => (
  <svg width="16" height="16" viewBox="0 0 16 16" aria-hidden>
    <rect x=".5" y="1.500" width="13" height="13" rx="1.500" fill="#f0d060" stroke="#c09820" />
    <path d="M9.500 4C8 3.500 7.500 5 7.200 7L6.500 10.500C6.200 12 5.500 12.300 4.500 12M5.500 7H9" fill="none" stroke="#5c4008" strokeWidth="1.200" />
    <path d="M12 9L15 12L12 15L9 12Z" fill="#ffe060" stroke="#a07c10" />
  </svg>
);
const ListIcon = () => (
  <svg width="16" height="16" viewBox="0 0 16 16" aria-hidden>
    <rect x=".5" y="1.500" width="13" height="11" fill="#fff" stroke="#3c98c8" />
    <path d="M1 2h13" stroke="#3c98c8" strokeWidth="2" />
    <path d="M3 5v6M3 6h3M3 9h3" stroke="#4878c0" />
    <rect x="7.500" y="5.500" width="8" height="10" rx="1" fill="#ffd840" stroke="#b08c10" />
    <path d="M13 7.500C11.500 7 11.500 9 11.200 11S10.500 14 9.500 13.500M10 10H13" fill="none" stroke="#5c4008" />
  </svg>
);
const Cross = () => (
  <svg width="11" height="11" viewBox="0 0 11 11" stroke="#8a8a8a" aria-hidden>
    <path d="M0.500 0.500L10.500 10.500M10.500 0.500L0.500 10.500" />
  </svg>
);
const Branch = ({ top, first, last, main }: { top?: boolean; first?: boolean; last?: boolean; main?: boolean }) =>
  top ? (
    <svg width="24" height="18" viewBox="0 0 24 18" fill="none" aria-hidden>
      <path d={first ? "M13.500 10V18" : "M13.500 0V8"} stroke="#808080" strokeDasharray="1 1" />
      <path d="M18 9.500H24" stroke="#808080" strokeDasharray="1 1" />
      <rect x="9.500" y="5.500" width="8" height="8" fill="#fff" stroke="#909090" />
      <path d="M11 9.500H16" stroke="#2c4c98" />
    </svg>
  ) : (
    <svg width="46" height="18" viewBox="0 0 46 18" fill="none" stroke="#808080" strokeDasharray="1 1" aria-hidden>
      {main && <path d="M13.500 0V18" />}
      <path d={last ? "M34.500 0V10" : "M34.500 0V18"} />
      <path d="M34.500 9.500H46" />
    </svg>
  );

const PARAMS: [string, string, string][] = [
  ["123", "EAX сигнал по порядку", "6"],
  ["123", "TimeFrame", "30 Minutes"],
  ["ab", "The_Entry", "====Trade Entry Options===="],
  ["123", "Count_var", "ЗОНА"],
  ["123", "BarsCount", "100"],
  ["123", "SnakeRange", "3"],
  ["123", "FilterPeriod", "21"],
  ["½", "MartFiltr", "2.0"],
  ["123", "PriceConst", "6"],
  ["½", "UrovMax", "1.0"],
  ["½", "UrovMin", "-1.0"],
  ["½", "Urov2h", "0.9"],
  ["½", "Urov2l", "-0.9"],
];

const BasketLine = ({ side }: { side: "TP" | "SL" }) => {
  const tp = side === "TP";
  return (
    <Line $gap={1} $mt={tp ? 3 : 1}>
      <Btn $w={64}>Basket {side}=$</Btn>
      <Box $w={36} defaultValue="0.0" aria-label={`Basket ${side}`} />
      <Mono $w={46} $c={tp ? "#00e000" : "#ff3c00"}>{tp ? "W: 0|UL" : "L: 0|UL"}</Mono>
      <Spinner aria-label="step">
        <svg width="4" height="8" viewBox="0 0 4 8" stroke="#ddd" aria-hidden><path d="M0 2.500H4M0 6.500H4" /></svg>
      </Spinner>
      <FieldLabel $w={34} $f={8} htmlFor={`pips-${side}`}>{side} Pips:</FieldLabel>
      <Box $w={30} id={`pips-${side}`} defaultValue="0.0" />
      <Btn $w={20}>set</Btn>
      <FieldLabel $w={41} $f={8} htmlFor={`adr-${side}`}>%ADR(10):</FieldLabel>
      <Box $w={30} id={`adr-${side}`} defaultValue="0.0" />
      <Btn $w={20}>set</Btn>
    </Line>
  );
};

const Header = () => (
  <TopBar>
    <Brand>
      <BrandHead>
        <svg width="12" height="12" viewBox="0 0 12 12" fill="none" stroke="#efc300" strokeWidth="1.300" aria-hidden>
          <circle cx="6" cy="6" r="5" />
          <path d="M4 3.500V5M8 3.500V5M3 7C4 9.500 8 9.500 9 7" />
        </svg>
        <div>
          <BrandName>DBMASMEAX007a3</BrandName>
          <BrandRev>rev.update.012.2</BrandRev>
          <BrandNote>FREE as in pips @ FF</BrandNote>
        </div>
      </BrandHead>
      <MagicRow>M# <Box $w={70} defaultValue="10230" /></MagicRow>
      <Stack>
        <Btn $t="dark" $w={120} $h={11}>DefaultDash,M30</Btn>
        <Btn $t="dark" $w={120} $h={11}>«SET COMMENTS»</Btn>
      </Stack>
    </Brand>
    <LockPanel>
      <Line><Btn $w={88}>Lock=$ Ч.ЧЧ</Btn><Btn $t="gold" $w={27}>trail</Btn></Line>
      <Levels>
        {[1, 2, 3, 4, 5, 6].map((i) => (
          <React.Fragment key={i}>
            <label htmlFor={`atp${i}`}>At P{i}:</label>
            <Box $w={26} $h={10} id={`atp${i}`} defaultValue="0.0" />
            <label htmlFor={`lv${i}`}>L{i}:</label>
            <Box $w={35} $h={10} id={`lv${i}`} defaultValue={i === 6 ? "7.0" : "0.0"} />
          </React.Fragment>
        ))}
      </Levels>
    </LockPanel>
    <Controls>
      <Line $gap={3}>
        <Btn $t="gold" $w={15} aria-label="next">
          <svg width="12" height="8" viewBox="0 0 12 8" aria-hidden><path d="M0 0L5 4L0 8ZM5 0L10 4L5 8ZM10 0H12V8H10Z" fill="#000" /></svg>
        </Btn>
        <Btn $t="gold" $w={26}>profit</Btn>
        <Btn $t="gold" $w={23}>acct</Btn>
        <Btn $t="gold" $w={26}>sess</Btn>
        <Btn $t="gold" $w={22}>SOH</Btn>
        <Btn $t="gold" $w={12} aria-label="log">
          <svg width="6" height="8" viewBox="0 0 6 8" aria-hidden><path d="M0 0H4L6 2V8H0ZM1 3V4H5V3Z" fill="#000" fillRule="evenodd" /></svg>
        </Btn>
        <Btn $t="gold" $w={12} aria-label="clock">
          <svg width="8" height="8" viewBox="0 0 8 8" fill="none" stroke="#000" aria-hidden><circle cx="4" cy="4" r="3.500" /><path d="M4 1.500V4H6" /></svg>
        </Btn>
        <Btn $t="gold" $w={13} aria-label="announce">
          <svg width="10" height="8" viewBox="0 0 10 8" aria-hidden><path d="M0 3L7 0V6L4 5V8H2V5H0ZM8 1H10V2H8ZM8 4H10V5H8Z" fill="#000" /></svg>
        </Btn>
        <Btn $t="gold" $w={13} aria-label="alert">
          <svg width="8" height="8" viewBox="0 0 8 8" fill="none" stroke="#000" aria-hidden><path d="M2 5V3A2 2 0 0 1 6 3V5L7.500 6.500H0.500Z" /></svg>
        </Btn>
        <Btn $w={17} aria-label="alerts">
          <svg width="14" height="8" viewBox="0 0 14 8" fill="none" stroke="#ddd" aria-hidden><path d="M1.500 5V3A1.500 1.500 0 0 1 4.500 3V5L5.500 6.500H0.500ZM8 2L11 1L13 6L10 6ZM9 4L12 3" /></svg>
        </Btn>
        <Btn $w={28}>BDM</Btn>
        <Btn $w={17}>SS</Btn>
        <Btn $w={12}>?</Btn>
        <Btn $t="black" $w={27}>Reset</Btn>
        <Btn $w={23}>GA#</Btn>
        <Btn $w={27}>PINS</Btn>
        <Btn $w={24}>EAX</Btn>
      </Line>
      <BasketLine side="TP" />
      <BasketLine side="SL" />
      <LowerControls>
        <OrderCol>
          <Line>
            <FieldLabel $w={94} htmlFor="total">Total Orders: 0 of:</FieldLabel>
            <Box $w={22} id="total" defaultValue="28" />
            <Btn $t="dark" $w={66}>Lot size: 0.01</Btn>
            <Btn $w={12}>+</Btn>
            <Btn $w={12}>-</Btn>
          </Line>
          <Line>
            <FieldLabel $w={94} htmlFor="maxo">Max.Orders/Symbol:</FieldLabel>
            <Box $w={22} id="maxo" defaultValue="1" />
            <Btn $t="gold" $w={94}>Only add if profitable</Btn>
          </Line>
        </OrderCol>
        <Gauge>
          <svg width="118" height="31" viewBox="0 0 118 31" fontFamily="DejaVu Sans Mono" fontSize="8" aria-hidden>
            <text x="0" y="8" fill="#a0522d">100%</text>
            <text x="57" y="8" fill="#ddd">0</text>
            <text x="98" y="8" fill="#008080">100%</text>
            <rect x="5.500" y="9.500" width="106" height="20" fill="#3c3c3c" stroke="#707070" />
            {[0, 1, 2, 3, 4].map((i) => <rect key={i} x={8 + i * 10} y="13" width="9" height="13" fill="#686868" />)}
            {[0, 1, 2, 3, 4].map((i) => <rect key={i} x={61 + i * 10} y="13" width="9" height="13" fill="#008080" />)}
            <path d="M69.500 3V18" stroke="#40e0d0" strokeWidth="2" />
            <text x="7" y="14" fontWeight="bold" fill="#e8e8e8">short</text>
            <text x="89" y="14" fontWeight="bold" fill="#e8e8e8">long</text>
            <text x="62" y="26" fontSize="11" fill="#40e0d0">20</text>
          </svg>
        </Gauge>
      </LowerControls>
    </Controls>
    <Panel $w={169} $h={63}>
      <YieldTable>
        <colgroup><col width="36" /><col width="40" /><col width="43" /><col width="47" /></colgroup>
        <thead><tr><th>YIELD</th><th>(RUR)</th><th>PIPS</th><th /></tr></thead>
        <tbody>
          {["Highest", "Lowest", "Current"].map((x) => (
            <YRow key={x} $c="#696969"><td>0.00%</td><td>0.00</td><td>0.0</td><td>{x}</td></YRow>
          ))}
          {["TODAY", "WEEKLY"].map((x) => (
            <YRow key={x} $c="#ff3c14" $l="#dcdcdc"><td>3.91%</td><td>679.60</td><td>29.8</td><td>{x}</td></YRow>
          ))}
        </tbody>
      </YieldTable>
    </Panel>
    <Panel $w={121} $h={74}>
      <Account>{`Account leverage 1/25
Initial bal.: 17361.73
Current bal.: 17361.73
Profit/Loss.:     0.00
Equity......: 17361.73
Margin......:     0.00
Free margin.: 17361.73
Margin level: --------`}</Account>
    </Panel>
    <Panel $w={214} $h={62}>
      <Sessions>
        <SessionTitle>Session(s): [Auto]=false [R]everse=false</SessionTitle>
        {["S0 00:00:00-23:59:59 OPEN", "S1 00:00:00-05:59:59 DISABLED", "S2 06:00:00-11:59:59 DISABLED", "S3 12:00:00-17:59:59 DISABLED", "S4 18:00:00-23:59:59 DISABLED"].map((x, i) => (
          <SessionLine key={x} $on={i === 0}><input type="checkbox" defaultChecked={i === 0} />AUTO:EAX:{x}</SessionLine>
        ))}
      </Sessions>
    </Panel>
    <Clocks>
      <tbody>
        {[["Sydney", "22:54", 0], ["Tokyo", "21:54", 0], ["Shanghai", "20:54", 0], ["Frankfurt", "14:54", 1], ["London", "13:54", 1], ["NewYork", "08:54", 1], ["Broker", "15:54", 1], ["UTC/GMT", "12:54", 2], ["Local", "21:54", 2]].map(([n, t, k]) => (
          <ClockRow key={n} $c={["#696969", "#32cd32", "#e0e0e0"][k as number]}><th>{n}</th><td>{t}</td></ClockRow>
        ))}
      </tbody>
    </Clocks>
    <Panel $w={275} $h={48}>
      <Scope>
        Hold scope #1: hold minutes since last closed order = 60<br />
        Hold scope #2: none<br />
        Hold scope #3: none<br />
        Disabled scope: symbol currencies in same direction<br />
        News scope: High/90/15
      </Scope>
    </Panel>
  </TopBar>
);

const BottomPanel = () => (
  <Bottom>
    <Group $gap={20}>
      <Small $w={196}>
        <colgroup>{[14, 13, 13, 14, 43, 15, 16, 15, 8, 29, 16].map((w, i) => <col key={i} width={w} />)}</colgroup>
        <thead>
          <tr>
            <Cell $bg="#484848" $c="#ddd">H</Cell>
            <Cell $bg="#484848" $c="#ddd">D</Cell>
            <Cell $bg="#efc300">N</Cell>
            <Cell />
            <Cell $bg="#060606" $c="#ddd" $f={9}>BASKET</Cell>
            <Cell $bg="#efc300" colSpan={3}>Spr:8.0</Cell>
            <Cell />
            <Cell $bg="#060606" $c="#ddd" colSpan={2}>CSM/RT</Cell>
          </tr>
        </thead>
        <tbody>
          {BASKETS.map(([s, f, v, bg, g]) => (
            <tr key={s}>
              <Cell $bg="#0c0c0c" $c="#282828">H</Cell>
              <Cell $bg="#0c0c0c" $c="#282828">D</Cell>
              <Cell $bg={f ? "#ff3c00" : "#0c0c0c"} $c={f ? "#efb030" : "#282828"}>N</Cell>
              <Cell $bg="#404040" $c="#ddd"><button>~</button></Cell>
              <Cell $bg="#404040" $c="#dcdcdc" $f={12}><button>{s}</button></Cell>
              <Cell $bg="#40e0d0" $f={11}><button>L</button></Cell>
              <Cell $bg="#ee82ee" $f={11}><button>S</button></Cell>
              <Cell $bg="#585858" $f={11}><button>C</button></Cell>
              <Cell />
              <Cell $bg={bg} $c="#101010" $f={11}>{v}</Cell>
              <Cell $bg="#000">
                {g[0] === "c" ? <Cmd c={g.slice(1)} /> : <Arrow dir={g[0] === "a" ? "u" : "d"} c={g.slice(1)} w={2} />}
              </Cell>
            </tr>
          ))}
        </tbody>
      </Small>
      <Ranks rows={["TAUD LAUD tAUD TAUD tAUD cAUD", "vCAD", "vCHF", "LEUR", "tGBP", "cJPY", "rNZD", "gUSD"]} />
    </Group>
    <Group $gap={9}>
      <Small $w={318}>
        <thead><tr>{PERIODS.map((x) => <HeadCell key={x}>CSM/{x}</HeadCell>)}</tr></thead>
        <tbody>
          <tr>
            {[["t", "NZD", "d", "7.5"], ["L", "NZD", "c", "7.8"], ["L", "NZD", "u", "7.8"], ["t", "NZD", "u", "7.2"], ["d", "GBP", "u", "6.4"], ["L", "AUD", "u", "7.6"]].map(([c, s, k, v], i) => (
              <Cell key={i} $bg={C[c]}>{s}{k === "c" ? <Cmd c="#0c0c0c" /> : <Mark k={k} c="#0c0c0c" s={8} />}{v}</Cell>
            ))}
          </tr>
        </tbody>
      </Small>
      <Ranks rows={[
        "TAUD TUSD TUSD TAUD TNZD TUSD",
        "tNZD LGBP LGBP sNZD tAUD LGBP",
        "tUSD LAUD LJPY sCAD gEUR dNZD",
        "gJPY LJPY LEUR sEUR gJPY rCAD",
        "rEUR LCAD tAUD cUSD rCAD sEUR",
        "rGBP gEUR sNZD vCHF rUSD cAUD",
        "vCAD rNZD cCHF vGBP vGBP vCHF",
        "vCHF vCHF vCAD vJPY vCHF vJPY",
      ]} />
      <Calendar>
        <colgroup><col width="55" /><col width="35" /><col /></colgroup>
        <thead><tr><th colSpan={3}>DBMASMEAX/FF Calendar|-06h00 to +2d00h00|Medium+  |Wed May 24, 2017|21:53</th></tr></thead>
        <tbody>
          {EVENTS.map(([t, c, x], i) => (
            <CalRow key={i} $c={x.includes("Holiday") ? "#5f9ea0" : c.endsWith("M") ? "#ffa500" : "#ff2400"}>
              <td>{t}</td><td>{c}</td><td>{x}</td>
            </CalRow>
          ))}
        </tbody>
      </Calendar>
    </Group>
  </Bottom>
);

const IndicatorList = () => (
  <Win $x={130} $y={263} $w={405} $h={235}>
    <WinTitle>
      <ListIcon />
      <h2>Список индикаторов на USDCHF,M5</h2>
      <WinBtn>?</WinBtn>
      <WinBtn aria-label="close"><Cross /></WinBtn>
    </WinTitle>
    <ListBody>
      <Tree>
        <TreeItem><Branch top first /><WindowIcon /><span>&nbsp;Главный график</span></TreeItem>
        <TreeItem><Branch main /><FnIcon /><span>SSRC+FL11-PIN-SNR</span></TreeItem>
        <TreeItem $sel><Branch main last /><FnIcon /><span>EAX_PIN_SSRC_1</span></TreeItem>
        <TreeItem><Branch top /><WindowIcon /><span>&nbsp;Окно индикатора 1</span></TreeItem>
        <TreeItem><Branch /><FnIcon /><span>SSRC_FOR_PIN</span></TreeItem>
        <TreeItem><Branch /><FnIcon /><span>SSRC_MTF</span></TreeItem>
        <TreeItem><Branch last /><FnIcon /><span>SSRC</span></TreeItem>
      </Tree>
      <SideBtns>
        <WinButton>Свойства</WinButton>
        <WinButton>Удалить</WinButton>
        <WinButton>Закрыть</WinButton>
      </SideBtns>
    </ListBody>
  </Win>
);

const CustomIndicator = () => (
  <Win $x={222} $y={565} $w={707}>
    <WinTitle>
      <h2>Custom Indicator - EAX_PIN_SSRC_1</h2>
      <WinBtn>?</WinBtn>
      <WinBtn aria-label="close"><Cross /></WinBtn>
    </WinTitle>
    <Tabs>
      <Tab $w={80}>О программе</Tab>
      <Tab $w={46}>Общие</Tab>
      <Tab $w={118} $on>Входные параметры</Tab>
      <Tab $w={41}>Цвета</Tab>
      <Tab $w={80}>Отображение</Tab>
    </Tabs>
    <TabPane>
      <ParamFrame>
        <Params>
          <colgroup><col width="278" /><col /></colgroup>
          <thead><tr><th>Переменная</th><th>Значение</th></tr></thead>
          <tbody>
            {PARAMS.map(([k, n, v]) => (
              <tr key={n}><td><ParamIcon k={k} />{n}</td><td>{v}</td></tr>
            ))}
          </tbody>
        </Params>
      </ParamFrame>
    </TabPane>
  </Win>
);

export default function App() {
  return (
    <Page>
      <Global />
      <WindowEdge />
      <Header />
      <Frame>
        <Grid>
          <colgroup>{WIDTHS.map((w, i) => <col key={i} width={w} />)}</colgroup>
          <GridHead />
          <tbody>{ROWS.map((r) => <SymbolRow key={r.s} r={r} />)}</tbody>
        </Grid>
        <BottomPanel />
        <Badge>1535Ч785</Badge>
      </Frame>
      <LevelArea>
        <LevelLine $mb={3} />
        <LevelLine $mb={31} />
        <LevelLine $mb={32} />
        <LevelLine $mb={3} />
        <LevelLine $mb={0} />
      </LevelArea>
      <ScrollFlag />
      <IndicatorList />
      <CustomIndicator />
      <Overlay width="1160" height="680" viewBox="0 0 1160 680" fill="#e53b30" stroke="#e53b30" aria-hidden>
        <path d="M345 269L312 323" strokeWidth="4" />
        <path d="M301 339L303 310L312 320L326 323Z" stroke="none" />
        <path d="M609 514L545 643" strokeWidth="4" />
        <path d="M533 666L533 636L543 644L558 648Z" stroke="none" />
        <path d="M1122 49L1128 66" strokeWidth="4" />
        <path d="M1133 83L1112 63L1127 64L1138 55Z" stroke="none" />
      </Overlay>
    </Page>
  );
}
